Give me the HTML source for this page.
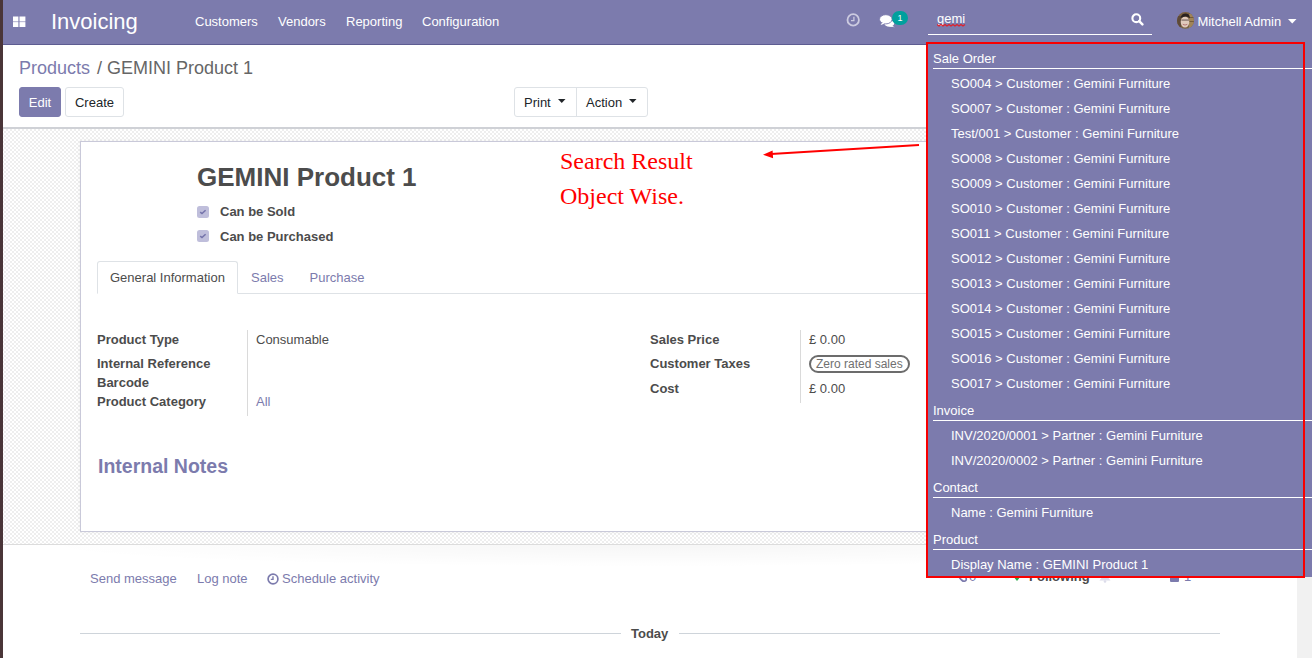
<!DOCTYPE html>
<html><head><meta charset="utf-8">
<style>
*{box-sizing:border-box;margin:0;padding:0}
html,body{width:1312px;height:658px;overflow:hidden;background:#fff;font-family:"Liberation Sans",sans-serif;font-size:13px;color:#4c4c4c}
.abs{position:absolute}
#lb{left:0;top:0;width:3px;height:658px;background:#4a3538}
#nav{left:3px;top:0;width:1309px;height:45px;background:#7c7bad;border-bottom:1px solid #5d5c91}
.nt{position:absolute;color:#fff;white-space:nowrap;line-height:1}
#cp{left:3px;top:45px;width:1309px;height:84px;background:#fff;border-bottom:2px solid #cfd1d6}
#content{left:3px;top:129px;width:1294px;height:416px;border-bottom:1px solid #dcdcdc;
 background-color:#fff;
 background-image:conic-gradient(#eeeeee 25%,#fff 0 50%,#eeeeee 0 75%,#fff 0);
 background-size:4px 4px;background-position:1px 0}
#sheet{left:80px;top:141px;width:1140px;height:391px;background:#fff;border:1px solid #c9c9d9;box-shadow:0 0 4px rgba(0,0,0,.06)}
.t{position:absolute;white-space:nowrap;line-height:1}
.b{font-weight:bold}
.btn{position:absolute;height:30px;border-radius:3px;font-size:13px;line-height:28px;padding-top:1px;text-align:center}
#dd{left:927px;top:44px;width:385px;height:533px;background:#7c7bad}
.dh{position:absolute;left:6px;right:0;color:#fff;font-size:13px;line-height:1}
.di{position:absolute;left:24px;color:#fff;font-size:13px;line-height:1;white-space:nowrap}
.dl{position:absolute;left:6px;right:0;height:1px;background:#fff}
.cb{width:12px;height:12px;border-radius:2px;background:#c1c0da}
#red{left:926px;top:42px;width:379px;height:536px;border:2px solid #f80000}
</style></head>
<body>
<div id="lb" class="abs"></div>
<div id="nav" class="abs">
  <!-- grid icon -->
  <svg class="abs" style="left:10px;top:15.5px" width="13" height="12" viewBox="0 0 13 12"><g fill="#fff"><rect x="0" y="0.5" width="5.4" height="5"/><rect x="6.5" y="0.5" width="5.9" height="5"/><rect x="0" y="6.1" width="5.4" height="4.9"/><rect x="6.5" y="6.1" width="5.9" height="4.9"/></g></svg>
  <div class="nt" style="left:48px;top:11px;font-size:22px">Invoicing</div>
  <div class="nt" style="left:192px;top:15px;font-size:13px">Customers</div>
  <div class="nt" style="left:275px;top:15px;font-size:13px">Vendors</div>
  <div class="nt" style="left:343px;top:15px;font-size:13px">Reporting</div>
  <div class="nt" style="left:419px;top:15px;font-size:13px">Configuration</div>
  <!-- clock -->
  <svg class="abs" style="left:842px;top:12px" width="16" height="16" viewBox="0 0 16 16"><circle cx="8.2" cy="7.9" r="5.7" fill="none" stroke="#cccbe0" stroke-width="1.8"/><path d="M8.9 4.7V8.6H6" fill="none" stroke="#cccbe0" stroke-width="1.3"/></svg>
  <!-- chat -->
  <svg class="abs" style="left:872px;top:12px" width="22" height="17" viewBox="0 0 22 17"><ellipse cx="14.3" cy="11.6" rx="4.9" ry="3.2" fill="#fff"/><path d="M16.5 13.6L19.8 15.2L14 14.6z" fill="#fff"/><ellipse cx="10.8" cy="7.3" rx="6.3" ry="4.6" fill="#fff" stroke="#7c7bad" stroke-width="0.9"/><path d="M7 10.8L5.6 13L10 11.6z" fill="#fff"/></svg>
  <div class="abs" style="left:889px;top:11px;width:16px;height:14px;border-radius:8px;background:#00a09d;color:#fff;font-size:9px;line-height:14px;text-align:center">1</div>
  <!-- search -->
  <div class="nt" style="left:934px;top:12px;font-size:13px">gemi</div>
  <div class="abs" style="left:925px;top:34px;width:224px;height:1px;background:#fff"></div>
  <svg class="abs" style="left:934px;top:24px" width="29" height="3" viewBox="0 0 29 3"><polyline points="0,0.5 2,2 4,0.5 6,2 8,0.5 10,2 12,0.5 14,2 16,0.5 18,2 20,0.5 22,2 24,0.5 26,2 28,0.5" fill="none" stroke="#e0202a" stroke-width="1.2"/></svg>
  <svg class="abs" style="left:1128px;top:13px" width="13" height="13" viewBox="0 0 13 13"><circle cx="5.3" cy="5.2" r="3.9" fill="none" stroke="#fff" stroke-width="2.1"/><path d="M8.2 8.1L11.4 11.3" stroke="#fff" stroke-width="2.5" stroke-linecap="round"/></svg>
  <!-- avatar -->
  <svg class="abs" style="left:1174px;top:12px" width="17" height="17" viewBox="0 0 17 17"><defs><clipPath id="av"><circle cx="8.5" cy="8.5" r="8.5"/></clipPath></defs><g clip-path="url(#av)"><rect width="17" height="17" fill="#7a6040"/><rect x="12" y="2" width="5" height="15" fill="#a08458"/><rect x="12" y="5" width="5" height="0.8" fill="#6a5236"/><rect x="12" y="9" width="5" height="0.8" fill="#6a5236"/><rect x="0" y="4" width="4" height="13" fill="#5e4a38"/><ellipse cx="8" cy="10" rx="4.3" ry="5.6" fill="#e0cabb"/><path d="M3.5 6Q4.5 1.5 9 1.6Q13 1.8 12.8 6.5L11.5 5.2Q8.5 3.8 5 5.6z" fill="#2a2220"/><rect x="4.4" y="7.6" width="7.6" height="0.9" fill="#5a4a46"/><path d="M5.8 12.3Q8 13.8 10.3 12.3" stroke="#b07070" stroke-width="0.9" fill="none"/><path d="M3 15Q8 18.5 13 15V17H3z" fill="#7d8a90"/></g></svg>
  <div class="nt" style="left:1194.4px;top:15px;font-size:13px">Mitchell Admin</div>
  <svg class="abs" style="left:1285px;top:19px" width="9" height="5" viewBox="0 0 9 5"><path d="M0 0H8.5L4.25 4.5z" fill="#fff"/></svg>
</div>

<div id="cp" class="abs">
  <div class="t" style="left:16px;top:14px;font-size:18px"><span style="color:#7c7bad">Products</span><span style="color:#666;margin-left:7px">/</span><span style="color:#666;margin-left:5px">GEMINI Product 1</span></div>
  <div class="btn" style="left:16px;top:42px;width:42px;background:#7c7bad;color:#fff;border:1px solid #7c7bad">Edit</div>
  <div class="btn" style="left:62px;top:42px;width:59px;background:#fff;color:#212529;border:1px solid #dee2e6">Create</div>
  <div class="btn" style="left:511px;top:42px;width:134px;background:#fff;color:#212529;border:1px solid #dee2e6"></div>
  <div class="abs" style="left:573px;top:42px;width:1px;height:30px;background:#dee2e6"></div>
  <div class="t" style="left:521px;top:51px;color:#212529">Print</div>
  <svg class="abs" style="left:555px;top:54px" width="8" height="4"><path d="M0 0H7.5L3.75 4z" fill="#212529"/></svg>
  <div class="t" style="left:583px;top:51px;color:#212529">Action</div>
  <svg class="abs" style="left:626px;top:54px" width="8" height="4"><path d="M0 0H7.5L3.75 4z" fill="#212529"/></svg>
</div>

<div id="content" class="abs"></div>
<div id="sheet" class="abs"></div>
<div class="t b" style="left:197px;top:164px;font-size:26px;color:#4c4c4c">GEMINI Product 1</div>
<svg class="abs" style="left:197px;top:206px" width="12" height="12" viewBox="0 0 12 12"><rect width="12" height="12" rx="2.5" fill="#bfbedb"/><path d="M3.2 6.1L5 7.6L8.6 4.2" fill="none" stroke="#7473aa" stroke-width="1.5"/></svg>
<div class="t b" style="left:220px;top:205px">Can be Sold</div>
<svg class="abs" style="left:197px;top:230px" width="12" height="12" viewBox="0 0 12 12"><rect width="12" height="12" rx="2.5" fill="#bfbedb"/><path d="M3.2 6.1L5 7.6L8.6 4.2" fill="none" stroke="#7473aa" stroke-width="1.5"/></svg>
<div class="t b" style="left:220px;top:230px">Can be Purchased</div>
<!-- tabs -->
<div class="abs" style="left:97px;top:293px;width:830px;height:1px;background:#dee2e6"></div>
<div class="abs" style="left:97px;top:261px;width:141px;height:33px;background:#fff;border:1px solid #dee2e6;border-bottom-color:#fff;border-radius:3px 3px 0 0"></div>
<div class="t" style="left:110px;top:271px;color:#4c4c4c">General Information</div>
<div class="t" style="left:251px;top:271px;color:#7c7bad">Sales</div>
<div class="t" style="left:309.5px;top:271px;color:#7c7bad">Purchase</div>
<!-- fields left -->
<div class="t b" style="left:97px;top:333px">Product Type</div>
<div class="t b" style="left:97px;top:357px">Internal Reference</div>
<div class="t b" style="left:97px;top:376px">Barcode</div>
<div class="t b" style="left:97px;top:395px">Product Category</div>
<div class="abs" style="left:247px;top:330px;width:1px;height:86px;background:#dadada"></div>
<div class="t" style="left:256px;top:333px">Consumable</div>
<div class="t" style="left:256px;top:395px;color:#7c7bad">All</div>
<!-- fields right -->
<div class="t b" style="left:650px;top:333px">Sales Price</div>
<div class="t b" style="left:650px;top:357px">Customer Taxes</div>
<div class="t b" style="left:650px;top:382px">Cost</div>
<div class="abs" style="left:800px;top:330px;width:1px;height:73px;background:#dadada"></div>
<div class="t" style="left:809px;top:333px">£ 0.00</div>
<div class="abs" style="left:809px;top:355px;width:101px;height:18px;border:2px solid #6c6c6c;border-radius:9px"></div>
<div class="t" style="left:816px;top:357.5px;color:#707070;font-size:12px">Zero rated sales</div>
<div class="t" style="left:809px;top:382px">£ 0.00</div>
<div class="t b" style="left:98px;top:457px;font-size:19.5px;color:#7c7bad">Internal Notes</div>
<!-- annotation -->
<div class="t" style="left:560px;top:149.2px;font-family:'Liberation Serif',serif;font-size:24px;color:#f00">Search Result</div>
<div class="t" style="left:560px;top:184px;font-family:'Liberation Serif',serif;font-size:24px;color:#f00">Object Wise.</div>
<svg class="abs" style="left:755px;top:138px" width="170" height="24" viewBox="755 138 170 24"><path d="M919 145L771 153.9" stroke="#f00" stroke-width="2"/><path d="M763 154.8L772.6 150.6L773.1 158.3z" fill="#f00"/></svg>
<!-- chatter -->
<div class="abs" style="left:3px;top:545px;width:1294px;height:24px;background:radial-gradient(ellipse 620px 22px at 50% 0,rgba(0,0,0,.035),rgba(0,0,0,0))"></div>
<div class="t" style="left:90px;top:572px;font-size:13px;color:#7c7bad">Send message</div>
<div class="t" style="left:197px;top:572px;font-size:13px;color:#7c7bad">Log note</div>
<svg class="abs" style="left:266.5px;top:573px" width="12" height="12" viewBox="0 0 12 12"><circle cx="6" cy="6" r="4.9" fill="none" stroke="#7c7bad" stroke-width="1.7"/><path d="M6 3.2V6.4H3.8" fill="none" stroke="#7c7bad" stroke-width="1.4"/></svg>
<div class="t" style="left:282px;top:572px;font-size:13px;color:#7c7bad">Schedule activity</div>
<svg class="abs" style="left:957px;top:568px" width="12" height="15" viewBox="0 0 12 15"><path d="M2.5 9.5Q5.5 14.5 8.5 12.8Q10 11.5 8.8 9.5L5.5 3" fill="none" stroke="#7c7bad" stroke-width="1.6"/></svg><div class="t" style="left:969px;top:570px;color:#7c7bad">0</div>
<svg class="abs" style="left:1013px;top:574px" width="8" height="8" viewBox="0 0 8 8"><path d="M0 2L4 7L8 2z" fill="#28a745"/></svg>
<div class="t b" style="left:1029px;top:570px;color:#4c4c4c">Following</div>
<svg class="abs" style="left:1099px;top:570px" width="12" height="13" viewBox="0 0 12 13"><path d="M2.5 4Q2.5 1 6 1Q9.5 1 9.5 4V8L11.5 10.5H0.5L2.5 8z" fill="#dcdcea"/><circle cx="6" cy="11.5" r="1.3" fill="#dcdcea"/></svg>
<div class="abs" style="left:1170px;top:572px;width:9px;height:10px;background:#7c7bad;border-radius:3px 3px 1px 1px"></div>
<div class="t" style="left:1184px;top:570px;color:#7c7bad">1</div>
<div class="abs" style="left:80px;top:633px;width:541px;height:1px;background:#ced4da"></div>
<div class="abs" style="left:679px;top:633px;width:541px;height:1px;background:#ced4da"></div>
<div class="t b" style="left:631px;top:627px;color:#4c4c4c">Today</div>
<div class="abs" style="left:1297px;top:129px;width:15px;height:529px;background:#f1f1f1"></div>
<div id="dd" class="abs">
  <div class="dh" style="top:8px">Sale Order</div>
  <div class="dl" style="top:24px"></div>
  <div class="di" style="top:33px">SO004 &gt; Customer : Gemini Furniture</div>
  <div class="di" style="top:58px">SO007 &gt; Customer : Gemini Furniture</div>
  <div class="di" style="top:83px">Test/001 &gt; Customer : Gemini Furniture</div>
  <div class="di" style="top:108px">SO008 &gt; Customer : Gemini Furniture</div>
  <div class="di" style="top:133px">SO009 &gt; Customer : Gemini Furniture</div>
  <div class="di" style="top:158px">SO010 &gt; Customer : Gemini Furniture</div>
  <div class="di" style="top:183px">SO011 &gt; Customer : Gemini Furniture</div>
  <div class="di" style="top:208px">SO012 &gt; Customer : Gemini Furniture</div>
  <div class="di" style="top:233px">SO013 &gt; Customer : Gemini Furniture</div>
  <div class="di" style="top:258px">SO014 &gt; Customer : Gemini Furniture</div>
  <div class="di" style="top:283px">SO015 &gt; Customer : Gemini Furniture</div>
  <div class="di" style="top:308px">SO016 &gt; Customer : Gemini Furniture</div>
  <div class="di" style="top:333px">SO017 &gt; Customer : Gemini Furniture</div>
  <div class="dh" style="top:360px">Invoice</div>
  <div class="dl" style="top:376px"></div>
  <div class="di" style="top:385px">INV/2020/0001 &gt; Partner : Gemini Furniture</div>
  <div class="di" style="top:410px">INV/2020/0002 &gt; Partner : Gemini Furniture</div>
  <div class="dh" style="top:437px">Contact</div>
  <div class="dl" style="top:453px"></div>
  <div class="di" style="top:462px">Name : Gemini Furniture</div>
  <div class="dh" style="top:489px">Product</div>
  <div class="dl" style="top:505px"></div>
  <div class="di" style="top:514px">Display Name : GEMINI Product 1</div>
</div>
<div id="red" class="abs"></div>
</body></html>
